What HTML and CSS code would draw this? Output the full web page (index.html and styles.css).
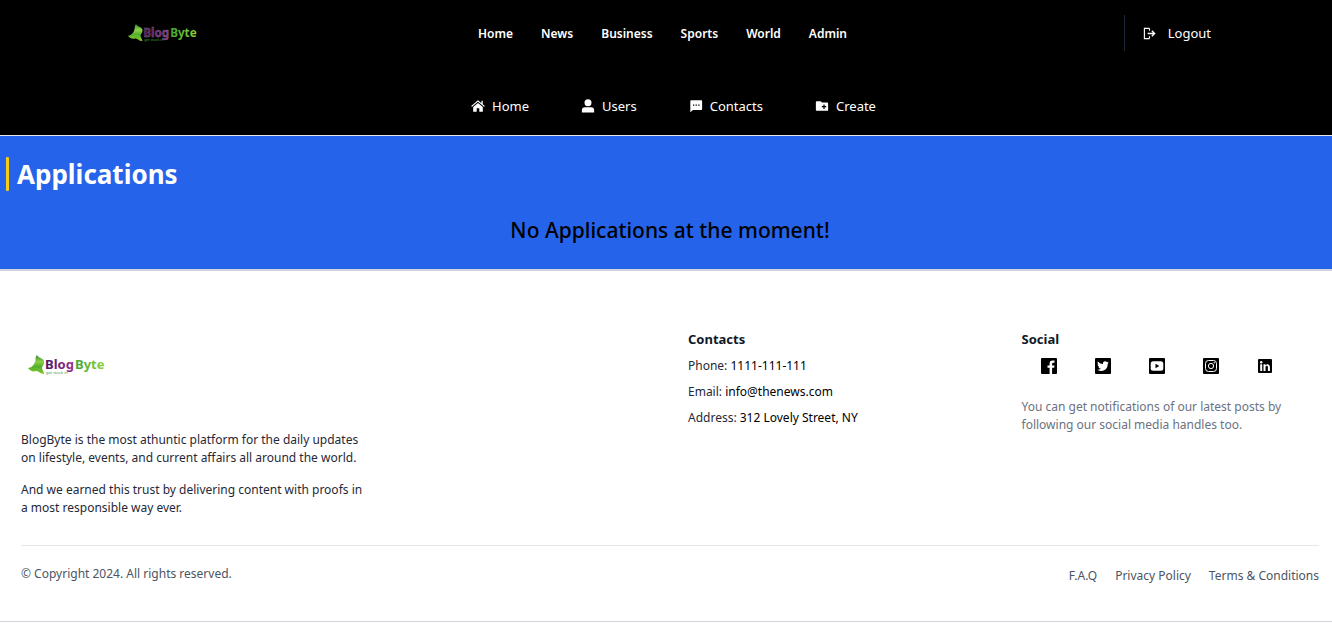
FILE: index.html
```html
<!DOCTYPE html>
<html lang="en">
<head>
<meta charset="utf-8">
<meta name="viewport" content="width=device-width, initial-scale=1">
<title>BlogByte - Applications</title>
<link rel="stylesheet" href="styles.css">
</head>
<body>
<header class="header">
  <div class="topbar">
    <a href="#" class="brand" aria-label="BlogByte">
      <svg class="logo logo-dark" viewBox="0 0 78 22">
        <defs>
          <linearGradient id="leaf" x1="0" y1="0" x2="0" y2="1"><stop offset="0" stop-color="#2f8a2c"/><stop offset=".35" stop-color="#8fd04a"/><stop offset=".6" stop-color="#55b030"/><stop offset="1" stop-color="#86c82c"/></linearGradient>
          <linearGradient id="purple" x1="0" y1="0" x2="1" y2="0"><stop offset="0" stop-color="#4a1560"/><stop offset="1" stop-color="#96308f"/></linearGradient>
          <linearGradient id="green" x1="0" y1="0" x2="1" y2="0"><stop offset="0" stop-color="#3fa535"/><stop offset="1" stop-color="#8fcf38"/></linearGradient>
        </defs>
        <path d="M9 1C10 4 15 4 16 7C17 10 14 12 14 14C14 16 16 17 16 20C12 20 11 17 8 17C5 18 2 17 0 14C3 14 6 11 7 8C8 5 7 3 9 1Z" fill="url(#leaf)"/>
        <text class="word word-blog" x="17" y="15" fill="url(#purple)">Blog</text>
        <text class="word" x="47" y="15" fill="url(#green)">Byte</text>
        <text class="tag" x="18" y="20">get stuck in</text>
      </svg>
    </a>
    <nav class="nav" aria-label="Sections">
      <a href="#">Home</a><a href="#">News</a><a href="#">Business</a><a href="#">Sports</a><a href="#">World</a><a href="#">Admin</a>
    </nav>
    <div class="account">
      <button type="button" class="logout">
        <svg class="icon-logout" viewBox="0 0 14 14" fill="none" stroke="currentColor"><path d="M7 1.500H1.500V12.500H7M7 1.500V4M7 10V12.500" stroke-width="1.200"/><path d="M5 7H12.500M9.500 4L12.500 7L9.500 10" stroke-width="1.500"/></svg>
        Logout
      </button>
    </div>
  </div>
  <nav class="subnav" aria-label="Admin">
    <a href="#"><svg class="icon" viewBox="0 0 16 16" fill="currentColor"><path d="M8 4.500L2.500 9V14.500H6.500V10.500H9.500V14.500H13.500V9Z"/><path d="M.7 8.500L8 2.300L15.300 8.500M12.700 2V6" fill="none" stroke="currentColor" stroke-width="1.500"/><path d="M1.500 9L8 3.600L14.500 9" fill="none" stroke="#000" stroke-width=".7"/></svg>Home</a>
    <a href="#"><svg class="icon" viewBox="0 0 16 16" fill="currentColor"><circle cx="8" cy="4.200" r="4"/><path d="M1 15.500V13Q1 9.300 4.500 9.300H11.500Q15 9.300 15 13V15.500Z"/></svg>Users</a>
    <a href="#"><svg class="icon" viewBox="0 0 16 16" fill="currentColor"><path fill-rule="evenodd" d="M2.500 1.500H14Q15 1.500 15 2.500V11.500Q15 12.500 14 12.500H4.500L1.500 15V2.500Q1.500 1.500 2.500 1.500ZM4.500 6.200V7.800H6V6.200ZM7.500 6.200V7.800H9V6.200ZM10.500 6.200V7.800H12V6.200Z"/></svg>Contacts</a>
    <a href="#"><svg class="icon" viewBox="0 0 16 16" fill="currentColor"><path fill-rule="evenodd" d="M2 2.500H6.500L8 4H14Q15 4 15 5V12.500Q15 13.500 14 13.500H2Q1 13.500 1 12.500V3.500Q1 2.500 2 2.500ZM9.600 6.300V8.100H7.800V9.500H9.600V11.300H11V9.500H12.800V8.100H11V6.300Z"/></svg>Create</a>
  </nav>
</header>

<main class="main">
  <h1 class="title"><span class="marker"></span>Applications</h1>
  <p class="empty">No Applications at the moment!</p>
</main>

<footer class="footer">
  <div class="columns">
    <section class="about">
      <a href="#" class="footer-brand" aria-label="BlogByte">
        <svg class="logo logo-large" viewBox="0 0 78 22">
          <path d="M9 1C10 4 15 4 16 7C17 10 14 12 14 14C14 16 16 17 16 20C12 20 11 17 8 17C5 18 2 17 0 14C3 14 6 11 7 8C8 5 7 3 9 1Z" fill="url(#leaf)"/>
          <text class="word" x="17" y="15" fill="url(#purple)">Blog</text>
          <text class="word" x="47" y="15" fill="url(#green)">Byte</text>
          <text class="tag" x="18" y="20">get stuck in</text>
        </svg>
      </a>
      <p>BlogByte is the most athuntic platform for the daily updates on lifestyle, events, and current affairs all around the world.</p>
      <p>And we earned this trust by delivering content with proofs in a most responsible way ever.</p>
    </section>
    <section class="contacts">
      <h2>Contacts</h2>
      <p>Phone: <a href="tel:1111111111">1111-111-111</a></p>
      <p>Email: <a href="mailto:info@thenews.com">info@thenews.com</a></p>
      <p>Address: <a href="#">312 Lovely Street, NY</a></p>
    </section>
    <section class="social">
      <h2>Social</h2>
      <div class="social-links">
        <a href="#" aria-label="Facebook"><svg viewBox="0 0 16 16"><rect width="16" height="16" rx="1"/><path fill="#fff" d="M8.600 16V9.800H6.500V7.400H8.600V5.600Q8.600 2.500 11.600 2.500L13.500 2.600V4.800H12.200Q11.100 4.800 11.100 5.900V7.400H13.500L13.200 9.800H11.100V16Z"/></svg></a>
        <a href="#" aria-label="Twitter"><svg viewBox="0 0 16 16"><rect width="16" height="16" rx="1"/><path fill="#fff" d="M13.800 4.400Q13.100 4.700 12.500 4.800Q13.200 4.300 13.400 3.500Q12.700 4 11.900 4.100C10.200 2.300 7.400 3.700 8 6.100Q4.900 6 2.900 3.500C2.200 4.700 2.600 6.100 3.700 6.800L2.600 6.500Q2.700 8.500 4.600 9L3.500 9.100Q4 10.700 5.900 10.800Q4.300 12 2.300 11.800C7.300 15 13 11.500 12.700 5.800Q13.400 5.200 13.800 4.400Z"/></svg></a>
        <a href="#" aria-label="YouTube"><svg viewBox="0 0 16 16"><rect width="16" height="16" rx="1"/><rect x="1.700" y="3.300" width="12.600" height="9.400" rx="2.500" fill="#fff"/><path d="M6.500 5.800V10.200L10.300 8Z"/></svg></a>
        <a href="#" aria-label="Instagram"><svg viewBox="0 0 16 16"><rect width="16" height="16" rx="1"/><g fill="none" stroke="#fff" stroke-width="1"><rect x="2.500" y="2.500" width="11" height="11" rx="3"/><circle cx="8" cy="8" r="2.600"/></g><circle cx="11.200" cy="4.800" r=".7" fill="#fff"/></svg></a>
        <a href="#" aria-label="LinkedIn"><svg viewBox="0 0 16 16"><rect x="1" y="1" width="14" height="14" rx="1"/><path fill="#fff" d="M3.200 6.300H5.200V13H3.200ZM6.500 6.300H8.400V7.200C9.500 5.500 12.900 5.700 12.900 9V13H10.900V9.300C10.900 7.300 8.500 7.300 8.500 9.300V13H6.500Z"/><circle cx="4.200" cy="4.200" r="1.200" fill="#fff"/></svg></a>
      </div>
      <p>You can get notifications of our latest posts by following our social media handles too.</p>
    </section>
  </div>
  <div class="legal">
    <p>© Copyright 2024. All rights reserved.</p>
    <nav class="legal-links" aria-label="Legal"><a href="#">F.A.Q</a><a href="#">Privacy Policy</a><a href="#">Terms &amp; Conditions</a></nav>
  </div>
</footer>
</body>
</html>
```

FILE: styles.css
```css
* { box-sizing: border-box; margin: 0; }

body {
  font-family: "Noto Sans", "Open Sans", sans-serif;
  font-size: 12px;
  line-height: 18px;
  color: #000;
  background: #fff;
}

a { color: inherit; text-decoration: none; }
svg { display: block; flex: none; }

/* Header */
.header {
  background: #000;
  color: #fff;
  border-bottom: 1px solid #e5e7eb;
}

.topbar {
  display: grid;
  grid-template-columns: 1fr auto 1fr;
  align-items: center;
  padding: 15px 121px 15px 128px;
}

.logo { width: 70px; height: 20px; overflow: visible; }
.logo-large { width: 78px; height: 22px; }
.word { font-family: "Noto Sans", sans-serif; font-size: 13px; font-weight: 700; }
.word-blog { stroke: #77707c; stroke-width: 0.4px; }
.tag { font-family: "Noto Sans", sans-serif; font-size: 4px; fill: #4f9a3a; }

.nav {
  display: flex;
  gap: 28px;
  padding: 2px 14px 0 0;
  font-weight: 600;
}

.account { display: flex; justify-content: flex-end; }

.logout {
  display: flex;
  align-items: center;
  gap: 12px;
  height: 36px;
  padding: 0 0 0 18px;
  border: 0;
  border-left: 1px solid #1f2937;
  background: none;
  color: inherit;
  font: inherit;
  font-size: 13px;
}

.icon-logout { width: 13px; height: 13px; }

.subnav {
  display: flex;
  justify-content: center;
  gap: 52px;
  padding: 30px 0 19px 15px;
  font-size: 13px;
  line-height: 20px;
}

.subnav a { display: flex; align-items: center; gap: 7px; }
.icon { width: 14px; height: 14px; }

/* Main */
.main {
  padding: 20px 6px 22px;
  background: #2563eb;
  border-bottom: 2px solid #d1d5db;
}

.title {
  display: flex;
  align-items: center;
  gap: 8px;
  color: #fff;
  font-size: 26px;
  line-height: 36px;
}

.marker { width: 3px; height: 34px; border-radius: 1px; background: #facc15; }

.empty {
  margin-top: 22px;
  padding-left: 8px;
  text-align: center;
  font-size: 21px;
  line-height: 33px;
  font-weight: 500;
}

/* Footer */
.footer {
  padding: 57px 13px 36px 21px;
  border-bottom: 1px solid #d1d5db;
}

.columns {
  display: grid;
  grid-template-columns: repeat(4, 1fr);
  gap: 36px;
  padding-bottom: 28px;
}

.about { grid-column: span 2; color: #1f2937; }
.about p { max-width: 350px; }
.about p + p { margin-top: 14px; }
.footer-brand { display: block; padding: 26px 7px 55px; }

.columns h2 { font-size: 13px; line-height: 22px; color: #111827; }

.contacts { color: #1f2937; }
.contacts p { margin-bottom: 8px; }
.contacts h2 { margin-bottom: 7px; }
.contacts a { color: #000; }

.social-links { display: flex; gap: 38px; padding: 8px 19px 24px; }
.social-links svg { width: 16px; height: 16px; }
.social p { max-width: 280px; color: #6b7280; }

.legal {
  display: flex;
  justify-content: space-between;
  padding-top: 19px;
  border-top: 1px solid #e5e7eb;
  color: #4b5563;
}

.legal-links { display: flex; gap: 18px; padding-top: 2px; }
```
